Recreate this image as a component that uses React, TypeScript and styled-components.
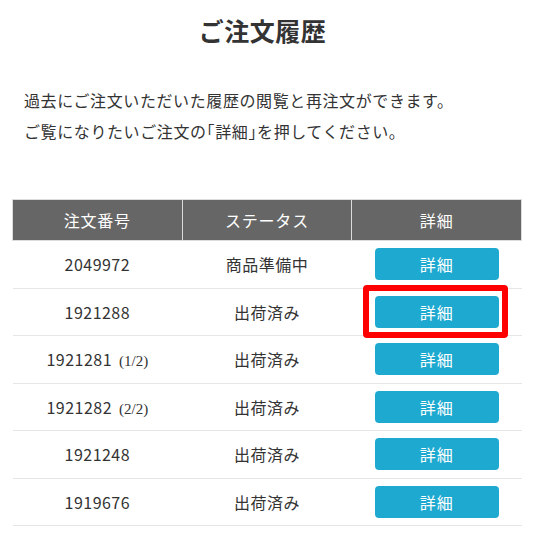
import React from 'react';
import styled, { createGlobalStyle } from 'styled-components';

const GlobalStyle = createGlobalStyle`
  body {
    margin: 0;
    background: #fff;
    color: #333;
    font-family: "Noto Sans CJK JP", "Noto Sans", sans-serif;
  }
`;

const Page = styled.main`
  width: 533px;
  box-sizing: border-box;
  padding: 12px 11px 0 12px;
`;

const Title = styled.h1`
  margin: 0;
  padding-right: 9px;
  font-size: 25px;
  line-height: 36px;
  font-weight: 700;
  text-align: center;
  letter-spacing: 0.02em;
`;

const Lead = styled.p`
  margin: 37px 0 0;
  padding-left: 12px;
  font-size: 16px;
  line-height: 31px;
  letter-spacing: 0.6px;
`;

const Bracket = styled.span`
  font-feature-settings: "halt";
`;

const OrderTable = styled.table`
  width: 510px;
  margin-top: 52px;
  border-collapse: collapse;
  table-layout: fixed;
`;

const HeadCell = styled.th`
  height: 40px;
  padding: 0;
  background: #666;
  color: #fff;
  font-size: 16px;
  font-weight: 400;
  letter-spacing: 0.05em;
  border: 1px solid #dcdcdc;
`;

const Row = styled.tr`
  height: 47.5px;
`;

const Cell = styled.td`
  padding: 0;
  text-align: center;
  font-size: 16px;
  letter-spacing: 0.03em;
  border-bottom: 1px solid #e6e6e6;
`;

const Part = styled.small`
  margin-left: 7px;
  font-family: "Liberation Serif", serif;
  font-size: 15px;
  letter-spacing: 0;
`;

const ButtonWrap = styled.span<{ $marked?: boolean }>`
  position: relative;
  display: inline-block;
  vertical-align: middle;

  ${({ $marked }) =>
    $marked &&
    `
    &::after {
      content: '';
      position: absolute;
      top: -11px;
      bottom: -10px;
      left: -12px;
      right: -9px;
      border: 6px solid #f00;
      border-radius: 4px;
      pointer-events: none;
    }
  `}
`;

const DetailButton = styled.button`
  display: block;
  width: 124px;
  height: 32px;
  padding: 0;
  border: none;
  border-radius: 4px;
  background: #1eaad0;
  color: #fff;
  font-family: inherit;
  font-size: 16px;
  letter-spacing: 0.05em;
  cursor: pointer;
`;

type Order = {
  no: string;
  part?: string;
  status: string;
  marked?: boolean;
};

const orders: Order[] = [
  { no: '2049972', status: '商品準備中' },
  { no: '1921288', status: '出荷済み', marked: true },
  { no: '1921281', part: '(1/2)', status: '出荷済み' },
  { no: '1921282', part: '(2/2)', status: '出荷済み' },
  { no: '1921248', status: '出荷済み' },
  { no: '1919676', status: '出荷済み' },
];

const App = () => {
  return (
    <>
      <GlobalStyle />
      <Page>
        <Title>ご注文履歴</Title>
        <Lead>
          過去にご注文いただいた履歴の閲覧と再注文ができます。
          <br />
          ご覧になりたいご注文の<Bracket>「</Bracket>詳細<Bracket>」</Bracket>を押してください。
        </Lead>
        <OrderTable>
          <thead>
            <tr>
              <HeadCell>注文番号</HeadCell>
              <HeadCell>ステータス</HeadCell>
              <HeadCell>詳細</HeadCell>
            </tr>
          </thead>
          <tbody>
            {orders.map((o) => (
              <Row key={o.no}>
                <Cell>
                  {o.no}
                  {o.part && <Part>{o.part}</Part>}
                </Cell>
                <Cell>{o.status}</Cell>
                <Cell>
                  <ButtonWrap $marked={o.marked}>
                    <DetailButton type="button">詳細</DetailButton>
                  </ButtonWrap>
                </Cell>
              </Row>
            ))}
          </tbody>
        </OrderTable>
      </Page>
    </>
  );
};

export default App;
